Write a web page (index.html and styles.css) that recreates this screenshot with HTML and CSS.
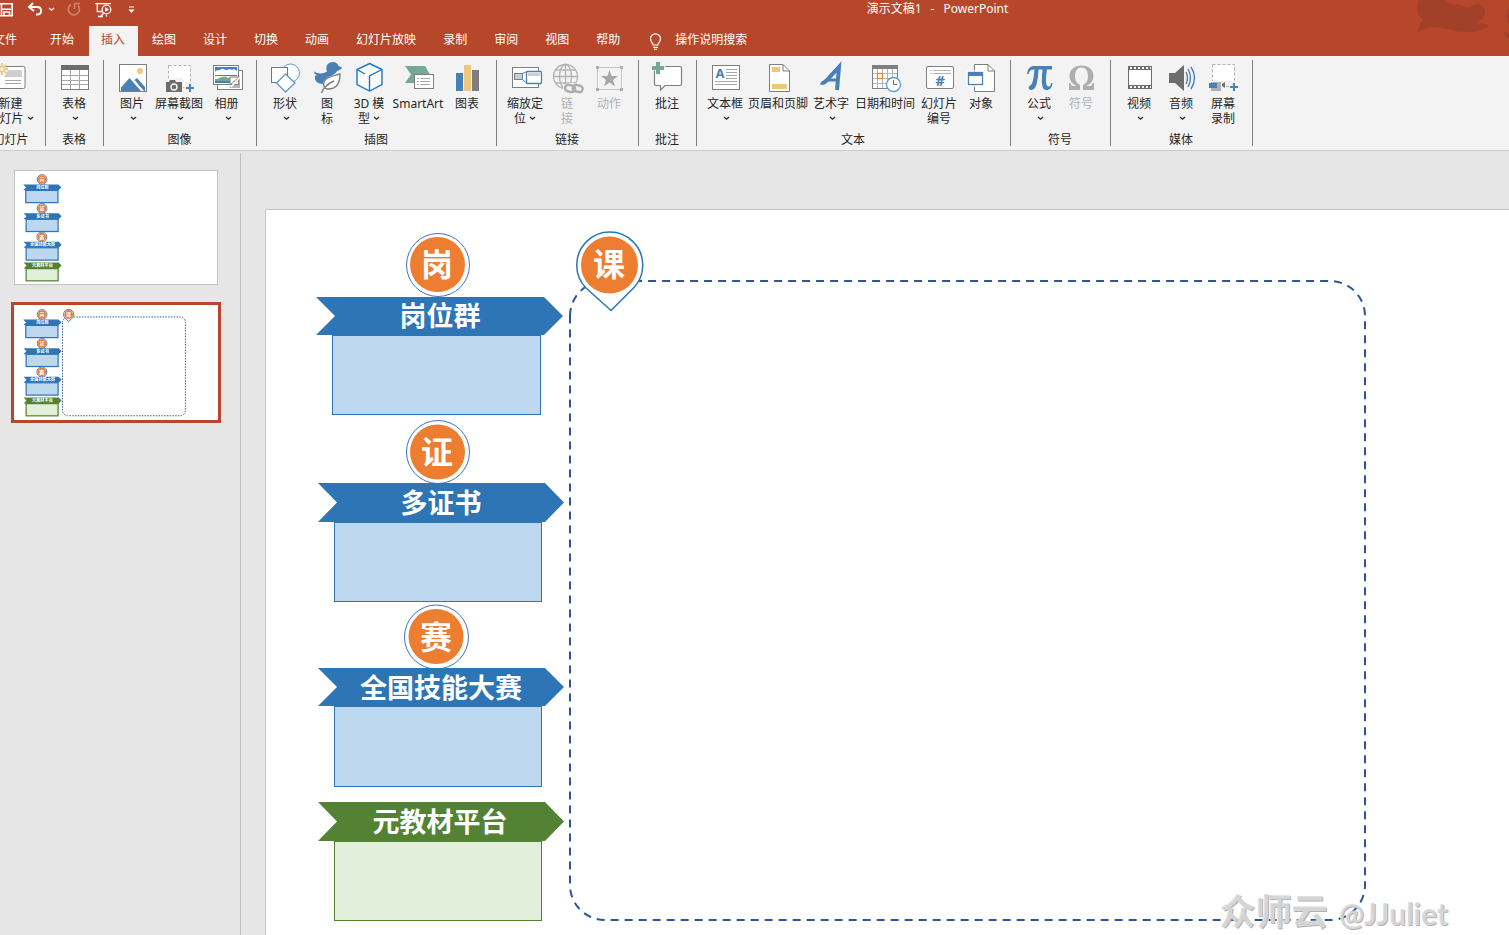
FILE: index.html
```html
<!DOCTYPE html>
<html lang="zh-CN">
<head>
<meta charset="utf-8">
<title>演示文稿1 - PowerPoint</title>
<link rel="stylesheet" href="styles.css">
</head>
<body>
<svg class="defs" aria-hidden="true">
  <symbol id="chev" viewBox="0 0 7 5"><path d="M1 1l2.5 2.3L6 1" fill="none" stroke="currentColor" stroke-width="1.2"/></symbol>
</svg>
<header class="top">
  <svg class="decor" viewBox="0 0 100 40" aria-hidden="true">
    <path d="M10 0C7 8 8 16 14 20C10 23 9 28 9 32C20 24 34 28 46 31C58 34 74 31 79 26C83 24 72 24 68 23C78 18 78 7 71 5C66 2 61 9 56 7C50 2 42 7 38 2L36 0Z"/>
    <path d="M100 9C97 13 97 20 100 24ZM93 31C96 34 97 38 100 39V33Z"/>
  </svg>
  <div class="titlebar">
    <div class="quick">
      <button aria-label="保存"><svg width="14" height="16" viewBox="0 0 14 16"><path d="M0 2.800H12.200V14.800H0M1.500 2.800V8.300H11M1.500 14.800V8.300M4 14.500V11H9.500V14.500" fill="none" stroke="currentColor" stroke-width="1.600"/></svg></button>
      <button class="undo" aria-label="撤消"><svg width="16" height="16" viewBox="0 0 16 16"><path d="M6 2L2 6L7 10M2.5 6H10C15.500 6 15.500 13.500 10 13.500H9" fill="none" stroke="currentColor" stroke-width="2"/></svg></button>
      <button class="drop" aria-label="撤消选项"><svg width="7" height="5"><use href="#chev"/></svg></button>
      <button class="redo" aria-label="重复"><svg width="16" height="16" viewBox="0 0 16 16"><path d="M5 3.5A5.6 5.6 0 1 0 12 4.5M8.5 8V2.7H14" fill="none" stroke="currentColor" stroke-width="1.7"/></svg></button>
      <button class="show" aria-label="从头开始"><svg width="18" height="17" viewBox="0 0 18 17"><path d="M0 2.700H16M2.300 3V10.500H7M5 16L8 13V11M3 15.500H8M12 15.500L11 14" fill="none" stroke="currentColor" stroke-width="1.3"/><circle cx="11.5" cy="8.5" r="4.3" fill="none" stroke="currentColor" stroke-width="1.3"/><path d="M10 6v5l4-2.5z" fill="currentColor"/></svg></button>
      <button class="custom" aria-label="自定义快速访问工具栏"><svg width="7" height="9" viewBox="0 0 7 9"><path d="M1 2h5" stroke="currentColor"/><path d="M0.5 4.5h6L3.5 8z" fill="currentColor"/></svg></button>
    </div>
    <h1 class="title"><span>演示文稿1</span><span>-</span><span>PowerPoint</span></h1>
  </div>
  <nav class="tabs">
    <button class="tab file">文件</button><button class="tab">开始</button><button class="tab active">插入</button><button class="tab">绘图</button><button class="tab">设计</button><button class="tab">切换</button><button class="tab">动画</button><button class="tab">幻灯片放映</button><button class="tab">录制</button><button class="tab">审阅</button><button class="tab">视图</button><button class="tab">帮助</button>
    <button class="tell"><svg width="13" height="18" viewBox="0 0 13 18"><path d="M4 12C4 9.500 1.500 9 1.500 5.800A5 5 0 0 1 11.500 5.800C11.500 9 9 9.500 9 12ZM4 14.300H9M5 16.400H8" fill="none" stroke="currentColor" stroke-width="1.2"/></svg>操作说明搜索</button>
  </nav>
</header>

<section class="ribbon">
  <div class="group first"><div class="items">
    <button class="cmd w53"><svg viewBox="0 0 32 32"><rect x="2.500" y="4.500" width="26.500" height="22" rx="1.500" fill="#fff" stroke="#7f7f7f"/><path d="M12 8H26V15H8Z" fill="#cfcfcf"/><path d="M9 18.500H25M9 21.500H25" stroke="#a6a6a6"/><path d="M6 1V13M0 7H12M2 3L10 11M10 3L2 11" stroke="#edc87e" stroke-width="2"/><circle cx="6" cy="7" r="1.700" fill="#fff"/></svg><span>新建<br>幻灯片<svg class="chev"><use href="#chev"/></svg></span></button>
  </div><div class="gname">幻灯片</div></div>

  <div class="group table"><div class="items">
    <button class="cmd"><svg viewBox="0 0 32 32"><rect x="2.500" y="3.500" width="27" height="24" fill="#fff" stroke="#7f7f7f"/><path d="M11.500 8V27M20.500 8V27M3 13.500H29M3 18.500H29M3 22.500H29" stroke="#a6a6a6"/><path d="M2 3H30V8H2Z" fill="#6d6d6d"/></svg><span>表格<br><svg class="chev"><use href="#chev"/></svg></span></button>
  </div><div class="gname">表格</div></div>

  <div class="group"><div class="items">
    <button class="cmd"><svg viewBox="0 0 32 32"><rect x="2.500" y="2.500" width="27" height="27" fill="#fff" stroke="#7f7f7f"/><circle cx="23" cy="9" r="3" fill="#edc87e"/><path d="M4 29V25.500L12.500 16L24 29ZM17.500 18L20 16L28 25V29H27Z" fill="#4a80b8"/></svg><span>图片<br><svg class="chev"><use href="#chev"/></svg></span></button>
    <button class="cmd w52"><svg viewBox="0 0 32 32"><rect x="4.500" y="3.500" width="22" height="22" fill="#fff" stroke="#b0b0b0" stroke-dasharray="3 2"/><path d="M0 16H19V31H0ZM21 20H32V32H21Z" fill="#f3f3f3"/><path d="M2 20H5L6 18H11L12 20H18V30H2Z" fill="#6d6d6d"/><circle cx="10" cy="25" r="3" fill="none" stroke="#fff" stroke-width="1.300"/><path d="M26 22V30M22 26H30" stroke="#4a80b8" stroke-width="2"/></svg><span>屏幕截图<br><svg class="chev"><use href="#chev"/></svg></span></button>
    <button class="cmd w44"><svg viewBox="0 0 32 32"><rect x="5.500" y="8.500" width="25" height="19" fill="#fff" stroke="#7f7f7f"/><path d="M17 26L28 14V26Z" fill="#b5b5b5"/><rect x="1.500" y="3.500" width="25" height="19" fill="#fff" stroke="#7f7f7f"/><path d="M3 5H25V14H3Z" fill="#4a80b8"/><path d="M3 13V10C5 7 7 9 8 8C11 5 13 9 15 8C18 6 20 9 22 7L25 9V13Z" fill="#fff"/><path d="M3 19V17C8 17 11 12 16 16L19 15V19Z" fill="#75a897"/><path d="M3 19H18V21H3Z" fill="#4a80b8"/><path d="M18 23V15H27Z" fill="#fff" stroke="#7f7f7f"/><path d="M19 25L29 14" stroke="#fff" stroke-width="1.500"/></svg><span>相册<br><svg class="chev"><use href="#chev"/></svg></span></button>
  </div><div class="gname">图像</div></div>

  <div class="group"><div class="items">
    <button class="cmd"><svg viewBox="0 0 32 32"><circle cx="20.500" cy="11" r="9" fill="#fff" stroke="#5b9bd5"/><rect x="1.500" y="5.500" width="16" height="15" fill="#fff" stroke="#4a80b8"/><path d="M15.500 12L25 21L15.500 30L6.500 21Z" fill="#fff" stroke="#5b8fc5" stroke-width="1.200"/></svg><span>形状<br><svg class="chev"><use href="#chev"/></svg></span></button>
    <button class="cmd"><svg viewBox="0 0 32 32"><path d="M2 9.500C6 12 11 12 15 9.500C13 4 16 0 21 0C24 0 26 2 26.500 4L30 5.500C29 8 27 8 25 9C24 11 23 11 21 13C15 15 11 19 11 22C6 22 2 19 3 14L5 13Q2 12 2 9.500Z" fill="#4a80b8"/><path d="M28 12C22 14 15 14 12.500 19C10.500 23 12 27 16 27C25 27 28 20 28 12ZM9.500 31C11 27 15 22 22 19" fill="#fff" stroke="#7f7f7f" stroke-width="1.400"/></svg><span>图<br>标</span></button>
    <button class="cmd"><svg viewBox="0 0 32 32"><path d="M15.500 1.500L28 7.500V22.500L15.500 29L3 22.500V7.500Z" fill="#fafafa" stroke="#1f77c0" stroke-width="1.400"/><path d="M3 7.500L11 12M28 7.500L15.500 14V29" fill="none" stroke="#1f77c0" stroke-width="1.400"/></svg><span>3D 模<br>型<svg class="chev"><use href="#chev"/></svg></span></button>
    <button class="cmd w56"><svg viewBox="0 0 32 32"><path d="M2 4H22L27 12.500L22 21H2L8 12.500Z" fill="#75a897"/><rect x="11.500" y="12.500" width="19" height="14" fill="#fff" stroke="#7f7f7f"/><path d="M14 16.500H16M17.500 16.500H27M14 19.500H16M17.500 19.500H27M14 22.500H16M17.500 22.500H27" stroke="#a6a6a6"/></svg><span>SmartArt</span></button>
    <button class="cmd"><svg viewBox="0 0 32 32"><path d="M4 11H11V29H4Z" fill="#4a80b8"/><path d="M12 3H19V29H12Z" fill="#edc87e"/><path d="M20 8H27V29H20Z" fill="#7f7f7f"/></svg><span>图表</span></button>
  </div><div class="gname">插图</div></div>

  <div class="group"><div class="items">
    <button class="cmd"><svg viewBox="0 0 32 32"><rect x="2.500" y="5.500" width="26" height="20" fill="#fff" stroke="#7f7f7f"/><path d="M12.500 11.500L17 9.500M12.500 17.500L17 21.500" stroke="#4a80b8"/><rect x="4.500" y="11.500" width="8" height="6" fill="#bcd0e6" stroke="#7f7f7f"/><rect x="16.500" y="9.500" width="15" height="12" rx="1" fill="#fff" stroke="#4a80b8" stroke-width="1.300"/><path d="M18 11H30V14H18Z" fill="#cfcfcf"/></svg><span>缩放定<br>位<svg class="chev"><use href="#chev"/></svg></span></button>
    <button class="cmd" disabled><svg viewBox="0 0 32 32"><g fill="none" stroke="#b5b2b5" stroke-width="1.300"><circle cx="13.500" cy="14.500" r="12"/><ellipse cx="13.500" cy="14.500" rx="6" ry="12"/><path d="M13.500 2.500V26.500M1.500 14.500H25.500M3.500 8H23.500M3.500 21H23.500"/></g><path d="M11 27a6 6 0 0 1 6-6h9a6 6 0 0 1 6 6v4H11Z" fill="#f3f3f3"/><g fill="none" stroke="#b0adb0" stroke-width="2.500" transform="rotate(12 22 27)"><rect x="13" y="24" width="10" height="6.500" rx="3.200"/><rect x="20.500" y="22.500" width="10" height="6.500" rx="3.200"/></g></svg><span>链<br>接</span></button>
    <button class="cmd" disabled><svg viewBox="0 0 32 32"><rect x="3.500" y="5.500" width="24" height="22" fill="none" stroke="#c4c4c4"/><path d="M2 4h3v3H2zM26 4h3v3h-3zM2 26h3v3H2zM26 26h3v3h-3z" fill="#b0adb0"/><path d="M15.500 8L17.500 14H24L19 18L21 24.500L15.500 20.500L10 24.500L12 18L7 14H13.500Z" fill="#a9a6a9"/></svg><span>动作</span></button>
  </div><div class="gname">链接</div></div>

  <div class="group"><div class="items">
    <button class="cmd"><svg viewBox="0 0 32 32"><path d="M4 4.500H28Q29.500 4.500 29.500 6V22Q29.500 23.500 28 23.500H13L8.500 28V23.500H4Q2.500 23.500 2.500 22V6Q2.500 4.500 4 4.500Z" fill="#fff" stroke="#7f7f7f" stroke-width="1.200"/><path d="M6 -1V13M-1 6H13" stroke="#f3f3f3" stroke-width="5"/><path d="M6 0V12M0 6H12" stroke="#75a897" stroke-width="4"/></svg><span>批注</span></button>
  </div><div class="gname">批注</div></div>

  <div class="group"><div class="items">
    <button class="cmd"><svg viewBox="0 0 32 32"><rect x="2.500" y="3.500" width="27" height="24" fill="#fff" stroke="#7f7f7f"/><path d="M16 7.500H27M16 10.500H27M16 13.500H27M16 16.500H27M5 19.500H27M5 22.500H27" stroke="#a6a6a6"/><text x="10" y="16" class="ico-a">A</text></svg><span>文本框<br><svg class="chev"><use href="#chev"/></svg></span></button>
    <button class="cmd w64"><svg viewBox="0 0 32 32"><path d="M6.500 2.500H20L26.500 9V29.500H6.500Z" fill="#fff" stroke="#7f7f7f"/><path d="M20 2.500V9H26.500" fill="none" stroke="#7f7f7f"/><path d="M9 5H17V10H9ZM9 22H24V27H9Z" fill="#edc87e"/></svg><span>页眉和页脚</span></button>
    <button class="cmd"><svg viewBox="0 0 32 32"><path d="M5 20.500Q7 22 10 19L23 5L21 28" fill="none" stroke="#4a80b8" stroke-width="4"/><path d="M11 18H22" stroke="#4a80b8" stroke-width="3"/></svg><span>艺术字<br><svg class="chev"><use href="#chev"/></svg></span></button>
    <button class="cmd w66"><svg viewBox="0 0 32 32"><rect x="2.500" y="3.500" width="25" height="23" fill="#fff" stroke="#7f7f7f"/><path d="M7.500 7V26M12.500 7V26M17.500 7V26M22.500 7V26M3 11.500H27M3 16.500H27M3 21.500H27" stroke="#b5b5b5"/><path d="M2 3H28V7H2Z" fill="#7f7f7f"/><rect x="7.500" y="11.500" width="5" height="5" fill="#fff" stroke="#e08a3c" stroke-width="1.300"/><circle cx="23.500" cy="22.500" r="7" fill="#fff" stroke="#5b9bd5" stroke-width="1.300"/><path d="M23.500 18V22.500H27" fill="none" stroke="#6d6d6d"/></svg><span>日期和时间</span></button>
    <button class="cmd"><svg viewBox="0 0 32 32"><rect x="2.500" y="4.500" width="27" height="22" rx="1.500" fill="#fff" stroke="#7f7f7f"/><path d="M6 8.500H8M9 8.500H27M6 11.500H8M9 11.500H27" stroke="#b5b5b5"/><text x="16" y="24" class="ico-n">#</text></svg><span>幻灯片<br>编号</span></button>
    <button class="cmd"><svg viewBox="0 0 32 32"><path d="M8.500 2.500H22L28.500 9V29.500H8.500Z" fill="#fff" stroke="#7f7f7f"/><path d="M22 2.500V9H28.500" fill="none" stroke="#7f7f7f"/><path d="M0 8H19V25H0Z" fill="#fff" opacity=".6"/><rect x="2.500" y="10.500" width="14" height="12" fill="#fff" stroke="#4a80b8" stroke-width="1.300"/><path d="M2 10H17V14H2Z" fill="#4a80b8"/></svg><span>对象</span></button>
  </div><div class="gname">文本</div></div>

  <div class="group"><div class="items">
    <button class="cmd"><svg viewBox="0 0 32 32"><path d="M3 12C4 6 6 4 11 4H28V7.500H23C22 13 21 24 24 24.500C26 25 27 23 27 21H28.500C28 26 26 28 22.500 28C18 28 17 23 18.500 7.500H14.500C14 16 13 28 7.500 28C3.500 28 4 24 7 23C9.500 20 10 12 10.500 7.500C7 7.500 6 8 4.500 12Z" fill="#4a80b8"/></svg><span>公式<br><svg class="chev"><use href="#chev"/></svg></span></button>
    <button class="cmd" disabled><svg viewBox="0 0 32 32"><path d="M3 28V21H4.500Q5 24 7 24H11C6 22 3.500 18.500 3.500 14C3.500 7.500 9 3.500 15.500 3.500S27.500 7.500 27.500 14C27.500 18.500 25 22 20 24H24Q26 24 26.500 21H28V28H17V23C21 21 22 18 22 14C22 8 19 5.500 15.500 5.500S9 8 9 14C9 18 10 21 14 23V28Z" fill="#b0adb0"/></svg><span>符号</span></button>
  </div><div class="gname">符号</div></div>

  <div class="group"><div class="items">
    <button class="cmd"><svg viewBox="0 0 32 32"><path d="M4 4H28V27H4Z" fill="#6d6d6d"/><path d="M5 8H27V23H5Z" fill="#fff"/><path d="M6 6H27M6 25H27" stroke="#fff" stroke-width="2" stroke-dasharray="2 2"/></svg><span>视频<br><svg class="chev"><use href="#chev"/></svg></span></button>
    <button class="cmd"><svg viewBox="0 0 32 32"><path d="M3 11H9L18 3V29L9 21H3Z" fill="#6d6d6d"/><path d="M20 10Q23 16 20 22M22 7Q27 16 22 25M25 5Q32 16 25 27" fill="none" stroke="#4a80b8" stroke-width="1.400"/></svg><span>音频<br><svg class="chev"><use href="#chev"/></svg></span></button>
    <button class="cmd"><svg viewBox="0 0 32 32"><rect x="4.500" y="2.500" width="22" height="22" fill="#fff" stroke="#b0b0b0" stroke-dasharray="3 2"/><path d="M0 19H21V32H0ZM21 19H32V32H21Z" fill="#f3f3f3"/><path d="M3 20H13V29H3Z" fill="#b0b0b0"/><path d="M1 21H9V26H1Z" fill="#4a80b8"/><path d="M14 22L17 20V26L14 24Z" fill="#6d6d6d"/><path d="M18 24.500H21" stroke="#b0b0b0"/><path d="M26 21V29M22 25H30" stroke="#4a80b8" stroke-width="2"/></svg><span>屏幕<br>录制</span></button>
  </div><div class="gname">媒体</div></div>
</section>

<main class="work">
  <aside class="thumbs">
    <button class="thumb" aria-label="幻灯片 1"><svg viewBox="0 0 1300 731"><use href="#modules"/></svg></button>
    <button class="thumb selected" aria-label="幻灯片 2"><svg viewBox="0 0 1300 731"><use href="#modules"/><use href="#course"/></svg></button>
  </aside>
  <section class="editor">
    <div class="slide">
      <svg class="canvas" width="1300" height="731" viewBox="0 0 1300 731">
        <g id="modules">
          <g class="badge"><circle class="ring" cx="172" cy="55" r="31.500"/><circle class="disc" cx="171.500" cy="54.500" r="27.500"/><text x="171" y="66">岗</text></g>
          <path class="blue" d="M50 87H278L297 106L278 125H50L69 106Z"/><text class="head" x="174" y="116">岗位群</text>
          <rect class="box" x="66.500" y="125.500" width="208" height="79"/>
          <g class="badge"><circle class="ring" cx="172" cy="242" r="31.500"/><circle class="disc" cx="171.500" cy="242" r="27.500"/><text x="171" y="254">证</text></g>
          <path class="blue" d="M52 273H279L298 292.500L279 312H52L71 292.500Z"/><text class="head" x="175" y="303">多证书</text>
          <rect class="box" x="68.500" y="312.500" width="207" height="79"/>
          <g class="badge"><circle class="ring" cx="170.500" cy="427" r="32"/><circle class="disc" cx="170" cy="426.500" r="27.500"/><text x="170" y="439">赛</text></g>
          <path class="blue" d="M52 458H279L298 477L279 496H52L71 477Z"/><text class="head" x="175" y="488">全国技能大赛</text>
          <rect class="box" x="68.500" y="496.500" width="207" height="80"/>
          <path class="green" d="M52 592H279L298 611.500L279 631H52L71 611.500Z"/><text class="head" x="174" y="622">元教材平台</text>
          <rect class="box pale" x="68.500" y="631.500" width="207" height="79"/>
        </g>
        <g id="course">
          <path class="dash" d="M304 106A35 35 0 0 1 339 71H1064A35 35 0 0 1 1099 106V675A35 35 0 0 1 1064 710H339A35 35 0 0 1 304 675Z"/>
          <path class="pin" d="M345 100.500L320 78A33 33 0 1 1 367.500 78Z"/>
          <g class="badge"><circle class="disc" cx="343.500" cy="55" r="28.500"/><text x="343" y="66">课</text></g>
        </g>
      </svg>
    </div>
    <p class="watermark">众师云 <span>@JJuliet</span></p>
  </section>
</main>
</body>
</html>
```
FILE: styles.css
```css
* { box-sizing: border-box; }
html, body { height: 100%; }
body {
  margin: 0;
  display: flex;
  flex-direction: column;
  overflow: hidden;
  background: #e6e6e6;
  color: #262626;
  font: 12px/15px "Noto Sans", "Noto Sans CJK SC", sans-serif;
}
button {
  margin: 0;
  padding: 0;
  border: 0;
  background: none;
  color: inherit;
  font: inherit;
}
svg { display: block; }
.defs { position: absolute; width: 0; height: 0; }

.top { position: relative; background: #b7472a; color: #fff; }
.decor { position: absolute; top: 0; right: 0; width: 100px; height: 40px; fill: #a34029; }
.titlebar { position: relative; display: flex; height: 26px; }
.quick { display: flex; align-items: center; width: 366px; height: 18px; }
.undo { margin-left: 13px; }
.drop { margin-left: 5px; }
.redo { margin-left: 11px; opacity: .3; }
.show { margin-left: 13px; }
.custom { margin-left: 15px; }
.title {
  flex: 1;
  display: flex;
  justify-content: center;
  gap: 9px;
  margin: 0;
  font-size: 12px;
  font-weight: 400;
  line-height: 18px;
}

.tabs { position: relative; display: flex; gap: 2px; height: 30px; }
.tab { padding: 0 13px 3px 12px; white-space: nowrap; }
.tab.file { margin: 0 6px 0 -19px; }
.tab.active { background: #f3f3f3; color: #b7472a; }
.tell { display: flex; align-items: center; gap: 13px; margin-left: 14px; padding-bottom: 3px; }
.tell svg { margin-top: 4px; }

.ribbon {
  display: flex;
  padding: 4px 0;
  background: #f3f3f3;
  border-bottom: 1px solid #cdcdcd;
}
.group {
  display: flex;
  flex-direction: column;
  justify-content: space-between;
  flex: none;
  height: 86px;
  padding: 2px 7px 0 8px;
  border-right: 1px solid #808080;
}
.group.first { margin-left: -23px; }
.group.table { padding-right: 7px; }
.items { display: flex; align-items: flex-start; }
.cmd { width: 42px; white-space: nowrap; text-align: center; }
.cmd > svg { width: 32px; height: 32px; margin: 0 auto 2px; overflow: visible; }
.cmd > span { display: block; margin: 0 -7px 0 -9px; }
.cmd:disabled { color: #b1b1b1; }
.w44 { width: 43px; }
.w52 { width: 52px; }
.w53 { width: 53px; }
.w56 { width: 56px; }
.w64 { width: 64px; }
.w66 { width: 66px; }
.chev { display: inline-block; width: 7px; height: 5px; margin-left: 3px; vertical-align: 2px; }
.gname { margin-right: 2px; line-height: 13px; text-align: center; }
.ico-a { font: 700 13px "Noto Sans", sans-serif; fill: #4a80b8; text-anchor: middle; }
.ico-n { font: 700 15px "Noto Sans", sans-serif; fill: #4a80b8; text-anchor: middle; }

.work { display: flex; flex: 1; min-height: 0; padding-top: 2px; }
.thumbs {
  flex: none;
  display: flex;
  flex-direction: column;
  align-items: flex-start;
  gap: 17px;
  width: 241px;
  padding: 17px 0 0 14px;
  border-right: 1px solid #bfbfbf;
}
.thumb {
  --line: 6px;
  --frame: 8px;
  --dashes: 10 8;
  width: 204px;
  border: 1px solid #c3c3c3;
  background: #fff;
}
.thumb svg { width: 100%; height: 113px; }
.thumb.selected { width: 210px; margin-left: -3px; padding: 1px; border: 3px solid #b7472a; }

.editor { position: relative; flex: 1; min-width: 0; overflow: hidden; padding: 56px 0 0 24px; }
.slide { border: 1px solid #c6c6c6; border-right: 0; background: #fff; overflow: hidden; }
.canvas { max-width: none; }
.canvas text, .head { font-family: "Noto Sans CJK SC", sans-serif; font-weight: 700; fill: #fff; text-anchor: middle; }
.badge text { font-size: 32px; }
.head { font-size: 27px; }
.ring { fill: #fff; stroke: #4472c4; stroke-width: var(--line, 1px); }
.disc { fill: #ed7d31; }
.blue { fill: #2e75b6; }
.green { fill: #548235; }
.box { fill: #bdd7ee; stroke: #2e75b6; stroke-width: var(--frame, 1px); }
.box.pale { fill: #e2efda; stroke: #548235; }
.dash { fill: none; stroke: #2f5597; stroke-width: var(--line, 2px); stroke-dasharray: var(--dashes, 8 6); }
.pin { fill: #fff; stroke: #2e75b6; stroke-width: var(--line, 1.5px); }
.watermark {
  position: absolute;
  right: 61px;
  bottom: 0;
  margin: 0;
  color: rgba(218, 218, 218, .9);
  font: 700 36px/44px "Noto Sans CJK SC", sans-serif;
  text-shadow: 1px 1px 0 #b4b4b4;
  white-space: nowrap;
}
.watermark span { margin-left: 3px; font: 700 30px/44px Lato, sans-serif; }
```
